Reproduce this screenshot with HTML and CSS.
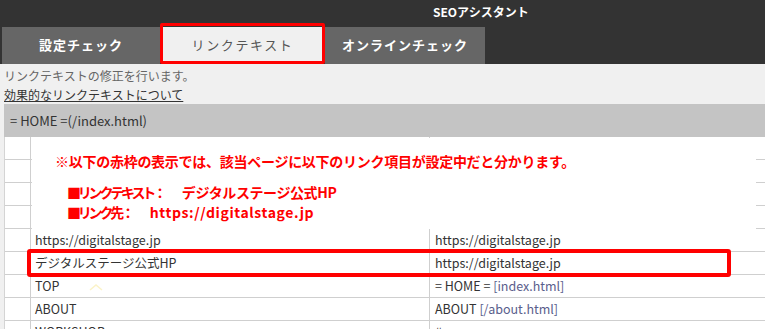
FILE: index.html
```html
<!DOCTYPE html>
<html lang="ja">
<head>
<meta charset="utf-8">
<title>SEOアシスタント</title>
<link rel="stylesheet" href="styles.css">
</head>
<body>
<header class="topbar">
  <div class="title">SEOアシスタント</div>
  <nav class="tabs">
    <div class="tab">設定チェック</div>
    <div class="tab tab-active">リンクテキスト</div>
    <div class="tab">オンラインチェック</div>
  </nav>
</header>
<section class="intro">
  <p class="intro-text">リンクテキストの修正を行います。</p>
  <a class="intro-link" href="#">効果的なリンクテキストについて</a>
</section>
<main class="content">
  <div class="pagebar">= HOME =(/index.html)</div>
  <div class="table">
    <div class="row"><div class="c1"></div><div class="c2"></div><div class="c3"></div></div>
    <div class="row"><div class="c1"></div><div class="c2"></div><div class="c3"></div></div>
    <div class="row"><div class="c1"></div><div class="c2"></div><div class="c3"></div></div>
    <div class="row"><div class="c1"></div><div class="c2"></div><div class="c3"></div></div>
    <div class="row"><div class="c1"></div><div class="c2">https://digitalstage.jp</div><div class="c3">https://digitalstage.jp</div></div>
    <div class="row"><div class="c1"></div><div class="c2">デジタルステージ公式HP</div><div class="c3">https://digitalstage.jp</div></div>
    <div class="row"><div class="c1"></div><div class="c2">TOP</div><div class="c3">= HOME = <span class="path">[index.html]</span></div></div>
    <div class="row"><div class="c1"></div><div class="c2">ABOUT</div><div class="c3">ABOUT <span class="path">[/about.html]</span></div></div>
    <div class="row"><div class="c1"></div><div class="c2">WORKSHOP</div><div class="c3">#</div></div>

    <div class="note">
      <p class="note-head">※以下の赤枠の表示では、該当ページに以下のリンク項目が設定中だと分かります。</p>
      <p class="note-item"><span class="note-label">■リンクテキスト：</span><span class="note-value">デジタルステージ公式HP</span></p>
      <p class="note-item"><span class="note-label">■リンク先：</span><span class="note-value note-url">https://digitalstage.jp</span></p>
    </div>
    <div class="highlight"></div>
    <svg class="caret" width="14" height="8" viewBox="0 0 14 8"><polyline points="1,7 7,2 13,7" fill="none" stroke="#fbf3c8" stroke-width="1.5"/></svg>
  </div>
</main>
</body>
</html>
```

FILE: styles.css
```css
html, body {
  margin: 0;
  padding: 0;
}
body {
  width: 765px;
  height: 329px;
  overflow: hidden;
  background: #f0f0f0;
  font-family: "Noto Sans CJK JP", "Noto Sans", sans-serif;
  color: #333;
}
.topbar {
  background: #333333;
  height: 64px;
}
.title {
  height: 27px;
  line-height: 24px;
  padding-left: 433px;
  color: #ffffff;
  font-size: 12px;
  font-weight: bold;
}
.tabs {
  display: flex;
  gap: 2px;
  padding-left: 2px;
  height: 37px;
}
.tab {
  position: relative;
  width: 158px;
  height: 37px;
  line-height: 35px;
  text-align: center;
  background: #666666;
  color: #ffffff;
  font-size: 13px;
  font-weight: bold;
  letter-spacing: 1px;
}
.tab + .tab {
  width: 160px;
}
.tab-active {
  width: 161px !important;
  background: #f0f0f0;
  color: #555555;
  font-weight: normal;
  letter-spacing: 1.6px;
}
.tab-active::after {
  content: "";
  position: absolute;
  top: -4px;
  left: -2px;
  right: -2px;
  bottom: 0;
  border: 3px solid #ff0000;
  border-radius: 2px;
}
.intro {
  height: 40px;
  box-sizing: border-box;
  padding: 2px 0 0 4px;
  font-size: 12px;
  line-height: 19px;
}
.intro-text {
  margin: 0;
  color: #666666;
}
.intro-link {
  color: #333333;
  text-decoration: underline;
}
.content {
  margin-left: 4px;
}
.pagebar {
  height: 33px;
  line-height: 33px;
  padding-left: 6px;
  background: #c4c4c4;
  font-size: 13px;
  color: #333;
}
.table {
  position: relative;
  background: #ffffff;
  border-left: 1px solid #d4d4d4;
  font-size: 12.5px;
  color: #333;
}
.row {
  display: grid;
  grid-template-columns: 26px 399px 1fr;
  height: 22px;
  border-bottom: 1px solid #cfcfcf;
}
.c1, .c2 {
  border-right: 1px solid #cfcfcf;
}
.c2 {
  padding-left: 4px;
  line-height: 22px;
  white-space: nowrap;
}
.c3 {
  padding-left: 5px;
  line-height: 22px;
  white-space: nowrap;
}
.path {
  color: #5a5e8c;
}
.note {
  position: absolute;
  top: 1px;
  left: 27px;
  width: 724px;
  height: 91px;
  background: #ffffff;
  color: #ff0000;
  font-weight: bold;
  font-size: 14px;
}
.note p {
  margin: 0;
}
.note-head {
  padding: 13px 0 0 23px;
  line-height: 20px;
  letter-spacing: -0.27px;
}
.note-item {
  display: flex;
  padding-left: 35px;
  line-height: 20px;
}
.note-label {
  letter-spacing: -3.2px;
  margin-right: 18px;
}
.note-value {
  letter-spacing: -0.4px;
}
.note-url {
  letter-spacing: 0.6px;
}
.note-head + .note-item {
  margin-top: 11px;
}
.highlight {
  position: absolute;
  top: 112px;
  left: 22px;
  width: 704px;
  height: 28px;
  box-sizing: border-box;
  border: 4px solid #ff0000;
  border-radius: 3px;
}
.caret {
  position: absolute;
  top: 146px;
  left: 84px;
}
```
